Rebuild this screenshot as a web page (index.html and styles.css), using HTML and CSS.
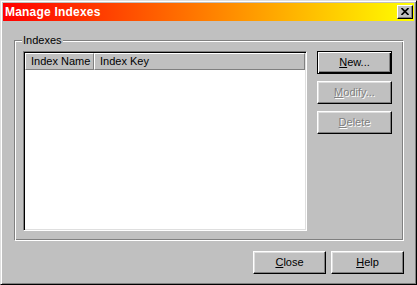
FILE: index.html
```html
<!DOCTYPE html>
<html lang="en">
<head>
<meta charset="UTF-8">
<title>Manage Indexes</title>
<link rel="stylesheet" href="styles.css">
</head>
<body>
<div class="window">
    <div class="titlebar">
        <span class="title">Manage Indexes</span>
        <span class="closebox">
            <svg width="8" height="7" viewBox="0 0 8 7"><path d="M0.5 0 L7.5 7 M7.5 0 L0.5 7" stroke="#000" stroke-width="1.6"/></svg>
        </span>
    </div>
    <div class="client">
        <div class="group">
            <span class="legend">Indexes</span>
            <div class="listview">
                <div class="header">
                    <div class="col col1">Index Name</div>
                    <div class="col col2">Index Key</div>
                </div>
            </div>
            <div class="sidebtns">
                <div class="btn default"><u>N</u>ew...</div>
                <div class="btn disabled"><u>M</u>odify...</div>
                <div class="btn disabled"><u>D</u>elete</div>
            </div>
        </div>
        <div class="bottombtns">
            <div class="btn small"><u>C</u>lose</div>
            <div class="btn small"><u>H</u>elp</div>
        </div>
    </div>
</div>
</body>
</html>
```
FILE: styles.css
```css
body {
    margin: 0;
    font-family: "Liberation Sans", Arial, sans-serif;
    font-size: 11px;
}
.window {
    width: 417px;
    height: 285px;
    box-sizing: border-box;
    background: #c0c0c0;
    border: 1px solid;
    border-color: #dfdfdf #000 #000 #dfdfdf;
    box-shadow: inset 1px 1px #fff, inset -1px -1px #808080;
    padding: 2px;
    display: flex;
    flex-direction: column;
}
.titlebar {
    height: 18px;
    display: flex;
    align-items: center;
    justify-content: space-between;
    padding: 0 1px 0 2px;
    background: linear-gradient(to right, #ff0000, #ffff00);
}
.title {
    color: #fff;
    font-weight: bold;
    font-size: 12px;
    letter-spacing: 0.2px;
}
.closebox {
    width: 16px;
    height: 14px;
    box-sizing: border-box;
    background: #c0c0c0;
    border: 1px solid;
    border-color: #fff #000 #000 #fff;
    box-shadow: inset -1px -1px #808080;
    display: flex;
    align-items: center;
    justify-content: center;
    padding: 0 1px 1px 0;
}
.closebox svg {
    display: block;
}
.client {
    flex: 1;
    display: flex;
    flex-direction: column;
    padding: 19px 10px 0 11px;
}
.group {
    position: relative;
    height: 201px;
    box-sizing: border-box;
    border: 1px solid;
    border-color: #808080 #fff #fff #808080;
    box-shadow: inset 1px 1px #fff, inset -1px -1px #808080;
    padding: 10px 11px 8px 8px;
    display: flex;
    gap: 10px;
}
.legend {
    position: absolute;
    left: 7px;
    top: -7px;
    padding: 0 1px;
    line-height: 13px;
    background: #c0c0c0;
}
.listview {
    width: 284px;
    height: 180px;
    box-sizing: border-box;
    background: #fff;
    border: 1px solid;
    border-color: #808080 #fff #fff #808080;
    box-shadow: inset 1px 1px #000, inset -1px -1px #dfdfdf;
    padding: 1px;
}
.header {
    display: flex;
    height: 17px;
}
.col {
    box-sizing: border-box;
    background: #c0c0c0;
    border: 1px solid;
    border-color: #fff #808080 #808080 #fff;
    padding-left: 5px;
    line-height: 15px;
}
.col1 {
    width: 69px;
}
.col2 {
    flex: 1;
}
.sidebtns {
    display: flex;
    flex-direction: column;
    gap: 7px;
}
.btn {
    width: 75px;
    height: 23px;
    box-sizing: border-box;
    border: 1px solid;
    border-color: #fff #000 #000 #fff;
    box-shadow: inset -1px -1px #808080, inset 1px 1px #dfdfdf;
    text-align: center;
    line-height: 21px;
}
.btn.small {
    width: 73px;
}
.default {
    border-color: #000;
    box-shadow: inset 1px 1px #fff, inset -1px -1px #000, inset -2px -2px #808080;
}
.disabled {
    color: #808080;
    text-shadow: 1px 1px #fff;
}
.bottombtns {
    display: flex;
    justify-content: flex-end;
    gap: 5px;
    margin-top: 10px;
}
```
